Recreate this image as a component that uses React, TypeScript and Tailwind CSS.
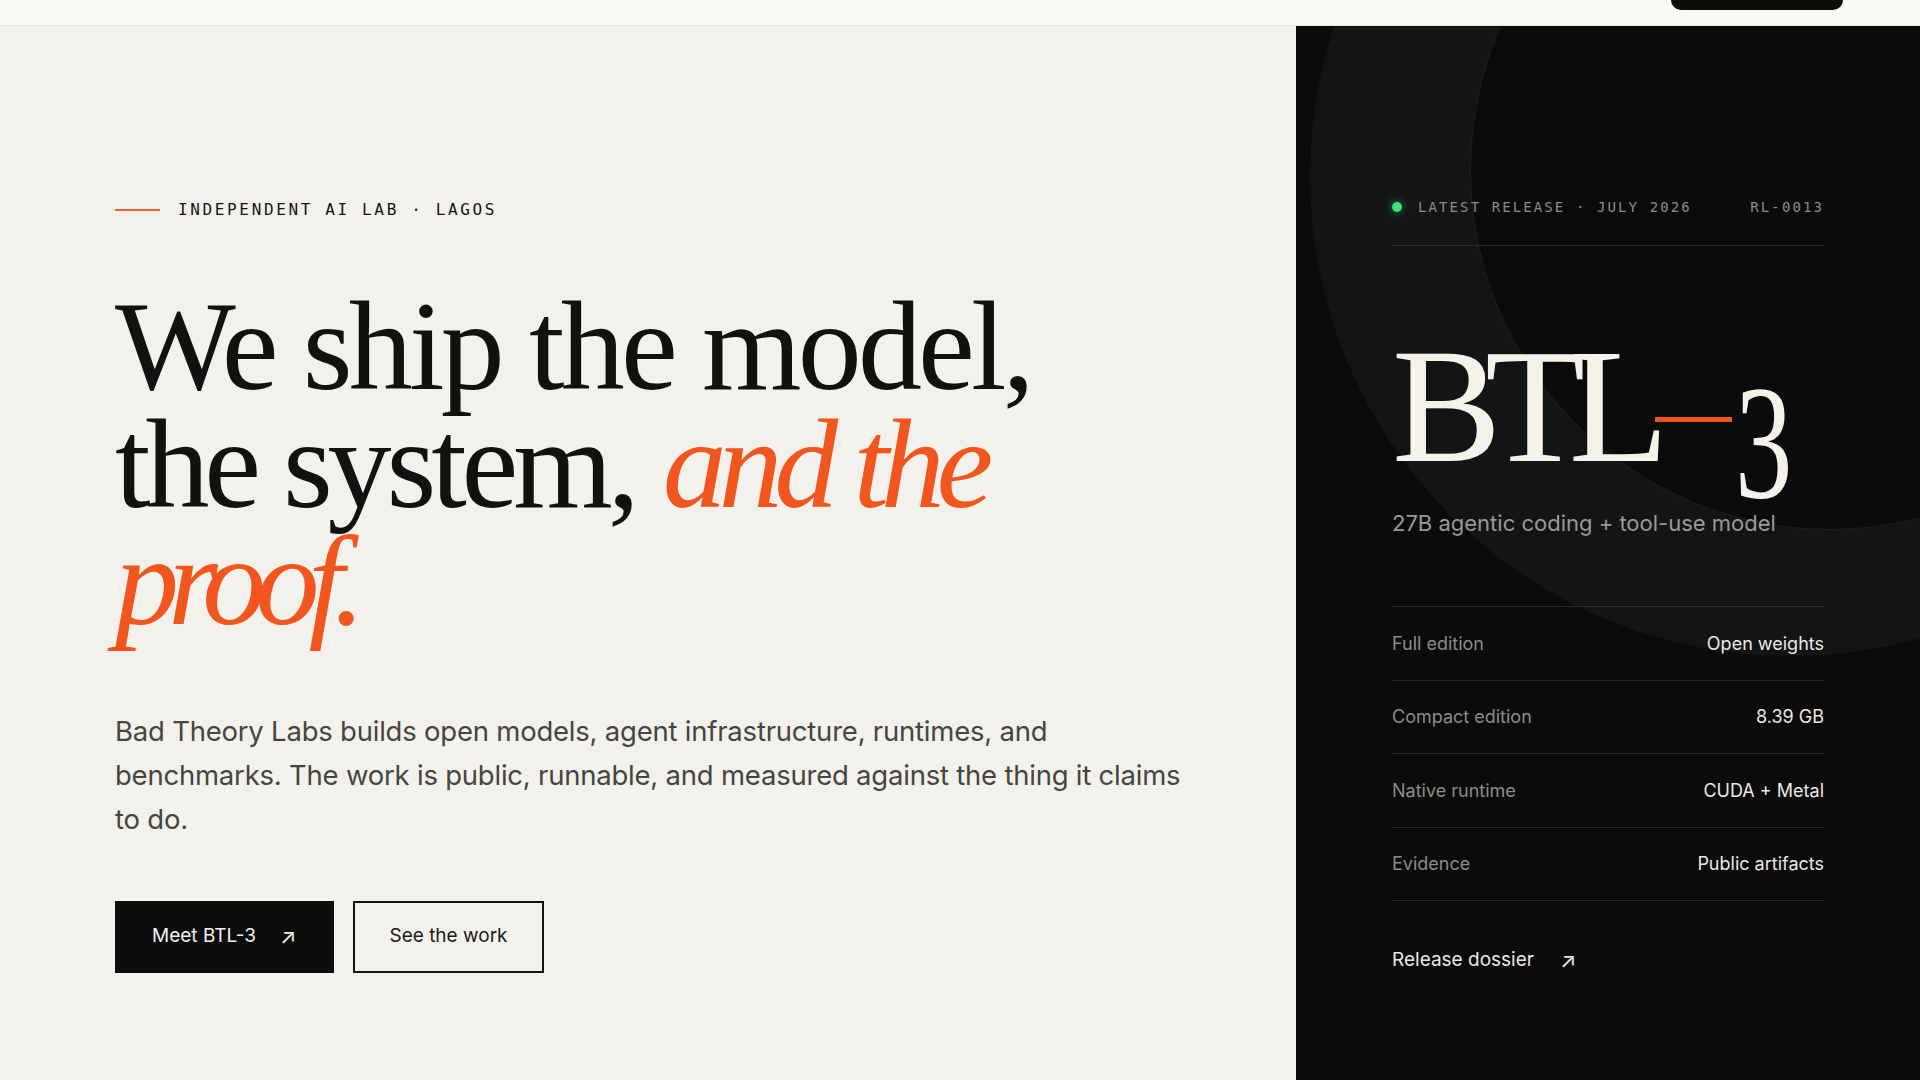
import React from "react";

const serif = "font-['Liberation_Serif','Times_New_Roman',serif]";
const mono = "font-['DejaVu_Sans_Mono','Liberation_Mono',monospace]";
const sans = "font-['Inter','Noto_Sans',sans-serif]";

const specs = [
  { label: "Full edition", value: "Open weights" },
  { label: "Compact edition", value: "8.39 GB" },
  { label: "Native runtime", value: "CUDA + Metal" },
  { label: "Evidence", value: "Public artifacts" },
];

const Hero = () => (
  <section className="w-[1296px] shrink-0 pl-[115px] pt-[173px]">
    {/* eyebrow */}
    <div className="flex items-center gap-[18px] h-[22px]">
      <span className="block w-[45px] h-[2px] bg-[#e8632f]" />
      <span className={`${mono} text-[16px] tracking-[0.165em] text-[#141413] uppercase`}>
        Independent AI Lab · Lagos
      </span>
    </div>

    <h1
      className={`${serif} mt-[67px] text-[128px] leading-[117.5px] tracking-[-0.03em] text-[#111110] font-normal`}
    >
      We ship the model,
      <br />
      <span className="tracking-[-0.04em]">the system,</span>{" "}
      <em className="text-[#f0561d] tracking-[-0.065em]">and the</em>
      <br />
      <em className="text-[#f0561d] tracking-[-0.085em]">proof.</em>
    </h1>

    <p className={`${sans} mt-[68px] w-max text-[27.5px] leading-[44px] text-[#46453f] tracking-[-0.008em]`}>
      Bad Theory Labs builds open models, agent infrastructure, runtimes, and
      <br />
      benchmarks. The work is public, runnable, and measured against the thing it claims
      <br />
      to do.
    </p>

    <div className={`${sans} mt-[60px] flex gap-[19px]`}>
      <button className="h-[72px] w-[219px] bg-[#0d0d0d] text-[#f3f1ec] text-[19px] flex items-center pl-[37px] gap-[24px]">
        <span>Meet BTL-3</span>
        <span className="text-[21px] leading-none">↗</span>
      </button>
      <button className="h-[72px] w-[191px] border-2 border-[#111] text-[#1a1a18] text-[19px] flex items-center justify-center">
        See the work
      </button>
    </div>
  </section>
);

const ReleasePanel = () => (
  <aside className="relative flex-1 overflow-hidden bg-[#0b0b0b]">
    {/* background rings */}
    <div className="absolute left-[14px] top-[-330px] w-[960px] h-[960px] rounded-full bg-[#131514]" />
    <div className="absolute left-[174px] top-[-216px] w-[720px] h-[720px] rounded-full bg-[#0b0b0b] border border-white/[0.07]" />

    <div className="relative px-24 pt-[171px]">
      <div className={`${mono} flex items-center justify-between h-[20px] pb-[28px] box-content border-b border-[#2a2a29] text-[14px] tracking-[0.15em] text-[#8d8c87]`}>
        <div className="flex items-center gap-4">
          <span className="block w-[10px] h-[10px] rounded-full bg-[#3ee07a] shadow-[0_0_8px_rgba(62,224,122,0.6)]" />
          <span>LATEST RELEASE · JULY 2026</span>
        </div>
        <span>RL-0013</span>
      </div>

      <div className={`${serif} mt-[80px] h-[160px] text-[164px] leading-[160px] tracking-[-0.1em] text-[#f5f2ea] flex items-start`}>
        <span>BTL</span>
        <span className="block shrink-0 w-[77px] h-[5px] bg-[#f0561d] mt-[91px] ml-[2px] mr-[3px]" />
        <span className="inline-block origin-left scale-x-[0.7] translate-y-[36px]">3</span>
      </div>

      <p className={`${sans} mt-[23px] text-[22px] leading-[28px] text-[#9a9994]`}>
        27B agentic coding + tool-use model
      </p>

      <div className={`${sans} mt-[69px] border-t border-[#2a2a29]`}>
        {specs.map((s) => (
          <div
            key={s.label}
            className="h-[73.5px] border-b border-[#2a2a29] flex items-center justify-between text-[18px]"
          >
            <span className="text-[#8c8b86]">{s.label}</span>
            <span className="text-[#ebe8e1]">{s.value}</span>
          </div>
        ))}
      </div>

      <a className={`${sans} mt-[47px] flex items-center gap-[26px] text-[19px] leading-[24px] text-[#ebe8e1]`}>
        Release dossier
        <span className="text-[21px] leading-none">↗</span>
      </a>
    </div>
  </aside>
);

export default function App() {
  return (
    <div className="w-[1920px] h-[1080px] overflow-hidden bg-[#f3f1ec] flex flex-col">
      <header className="h-[26px] shrink-0 bg-[#faf9f6] border-b border-[#e4e2dc] flex justify-end pr-[77px]">
        <div className="w-[172px] h-[10px] bg-[#0d0d0d] rounded-b-[10px]" />
      </header>
      <main className="flex flex-1">
        <Hero />
        <ReleasePanel />
      </main>
    </div>
  );
}
